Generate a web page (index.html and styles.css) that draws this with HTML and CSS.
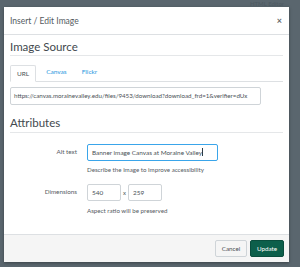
FILE: index.html
```html
<!DOCTYPE html>
<html>
<head>
<meta charset="utf-8">
<link rel="stylesheet" href="styles.css">
</head>
<body>
<div class="page">
  <div class="bg-line"><span class="bg-text">HTML Editor</span></div>
  <div class="dialog">
    <div class="header">
      <span class="title">Insert / Edit Image</span>
      <span class="close">×</span>
    </div>
    <div class="content">
      <div class="section-title first">Image Source</div>
      <div class="tabs">
        <span class="tab active">URL</span>
        <span class="tab">Canvas</span>
        <span class="tab">Flickr</span>
      </div>
      <div class="url-input">https://canvas.morainevalley.edu/files/9453/download?download_frd=1&amp;verifier=dUx</div>
      <div class="section-title">Attributes</div>
      <div class="row alt-row">
        <span class="label">Alt text</span>
        <div class="field">
          <div class="text-input focused">Banner image Canvas at Moraine Valley<span class="caret"></span></div>
          <div class="hint">Describe the image to improve accessibility</div>
        </div>
      </div>
      <div class="row dim-row">
        <span class="label">Dimensions</span>
        <div class="field">
          <div class="dims">
            <div class="num-input">540</div>
            <span class="times">x</span>
            <div class="num-input">259</div>
          </div>
          <div class="hint">Aspect ratio will be preserved</div>
        </div>
      </div>
    </div>
    <div class="footer">
      <span class="btn cancel">Cancel</span>
      <span class="btn update">Update</span>
    </div>
  </div>
</div>
</body>
</html>
```
FILE: styles.css
```css
* { box-sizing: border-box; }
html, body { margin: 0; padding: 0; }
body {
  width: 300px;
  height: 267px;
  overflow: hidden;
  background: #5a666e;
  font-family: Lato, "Open Sans", sans-serif;
  color: #3b4449;
}
.page { padding-left: 4px; }
.bg-line {
  height: 7px;
  text-align: right;
  padding-right: 16px;
  font-size: 6px;
  line-height: 7px;
  color: #4e5a62;
}
.dialog {
  position: relative;
  width: 285px;
  height: 255px;
  background: #fff;
  display: flex;
  flex-direction: column;
  box-shadow: 0 1px 3px rgba(0,0,0,0.35);
}
.header {
  height: 28px;
  border-bottom: 1px solid #dde0e3;
  display: flex;
  align-items: center;
  justify-content: space-between;
  padding: 0 6px 0 6px;
  flex: none;
}
.title { font-size: 8.5px; color: #555b5f; }
.close { font-size: 9px; color: #666; font-weight: bold; margin-right: 1px; }
.content { flex: 1; padding: 0 6px; }
.section-title {
  font-size: 11.5px;
  color: #42494e;
  height: 22px;
  line-height: 24px;
  border-bottom: 1px solid #e5e7e9;
}
.section-title.first { height: 21px; line-height: 23px; }
.tabs {
  margin-top: 9px;
  height: 17px;
  border-bottom: 1px solid #dde0e3;
  display: flex;
  align-items: flex-end;
}
.tab {
  font-size: 6.5px;
  color: #2a98e0;
  height: 17px;
  line-height: 15px;
  padding: 0 7px;
  margin-right: 1px;
}
.tab.active {
  color: #4a5156;
  border: 1px solid #dde0e3;
  border-bottom: 1px solid #fff;
  border-radius: 2px 2px 0 0;
  height: 17px;
  margin-bottom: -1px;
  padding: 0 6px;
  margin-right: 3px;
}
.url-input {
  margin-top: 5px;
  width: 251px;
  height: 18px;
  border: 1px solid #cfd4d8;
  border-radius: 2px;
  font-size: 6.2px;
  line-height: 16px;
  padding-left: 3px;
  white-space: nowrap;
  overflow: hidden;
  color: #4a5156;
}
.url-input + .section-title { margin-top: 6px; }
.row { display: flex; }
.label {
  width: 77px;
  text-align: right;
  font-size: 6.3px;
  color: #555b5f;
  padding-right: 10px;
  flex: none;
}
.alt-row { margin-top: 11px; }
.alt-row .label { line-height: 16px; }
.field { display: flex; flex-direction: column; }
.text-input {
  width: 131px;
  height: 17px;
  border: 1px solid #3aa5ea;
  border-radius: 2px;
  font-size: 6.4px;
  line-height: 15px;
  padding-left: 4px;
  white-space: nowrap;
  color: #4a5156;
}
.caret {
  display: inline-block;
  width: 1px;
  height: 8px;
  background: #2d3b45;
  vertical-align: -1px;
}
.hint { font-size: 6.2px; margin-top: 5px; color: #555b5f; }
.dim-row { margin-top: 11px; }
.dim-row .label { line-height: 16px; }
.dims { display: flex; align-items: center; }
.num-input {
  width: 34px;
  height: 17px;
  border: 1px solid #cfd4d8;
  border-radius: 2px;
  font-size: 6.4px;
  line-height: 15px;
  padding-left: 4px;
  color: #4a5156;
}
.times { font-size: 6px; width: 7px; text-align: center; color: #555b5f; }
.dim-row .hint { margin-top: 6px; }
.footer {
  flex: none;
  height: 28px;
  background: #f5f5f5;
  border-top: 1px solid #dde0e3;
  display: flex;
  justify-content: flex-end;
  align-items: flex-start;
  padding: 5px 5px 0 0;
  gap: 3px;
}
.btn {
  height: 17px;
  line-height: 15px;
  font-size: 6.3px;
  border-radius: 2px;
  text-align: center;
}
.cancel {
  width: 32px;
  background: #f5f5f5;
  border: 1px solid #cfd4d8;
  color: #4a5156;
}
.update {
  width: 34px;
  background: #0d5f4b;
  border: 1px solid #0a4d3d;
  color: #fff;
}
```
